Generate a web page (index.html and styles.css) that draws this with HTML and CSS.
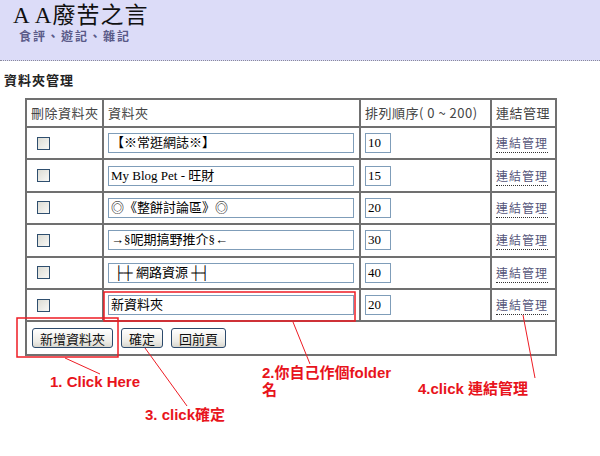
FILE: index.html
```html
<!DOCTYPE html>
<html lang="zh-Hant">
<head>
<meta charset="utf-8">
<title>資料夾管理</title>
<link rel="stylesheet" href="styles.css">
</head>
<body>
<div class="page">
  <header class="banner">
    <h1 class="title">A A廢苦之言</h1>
    <div class="subtitle">食評、遊記、雜記</div>
  </header>

  <h2 class="section">資料夾管理</h2>

  <table class="grid">
    <colgroup>
      <col class="c1"><col class="c2"><col class="c3"><col class="c4">
    </colgroup>
    <thead>
      <tr class="head">
        <th>刪除資料夾</th>
        <th>資料夾</th>
        <th>排列順序( 0 ~ 200)</th>
        <th>連結管理</th>
      </tr>
    </thead>
    <tbody>
      <tr>
        <td><span class="chk"></span></td>
        <td><span class="field name">【※常逛網誌※】</span></td>
        <td><span class="field order">10</span></td>
        <td><a class="link">連結管理</a></td>
      </tr>
      <tr>
        <td><span class="chk"></span></td>
        <td><span class="field name">My Blog Pet - 旺財</span></td>
        <td><span class="field order">15</span></td>
        <td><a class="link">連結管理</a></td>
      </tr>
      <tr>
        <td><span class="chk"></span></td>
        <td><span class="field name">◎《整餅討論區》◎</span></td>
        <td><span class="field order">20</span></td>
        <td><a class="link">連結管理</a></td>
      </tr>
      <tr>
        <td><span class="chk"></span></td>
        <td><span class="field name">→§呢期搞野推介§←</span></td>
        <td><span class="field order">30</span></td>
        <td><a class="link">連結管理</a></td>
      </tr>
      <tr>
        <td><span class="chk"></span></td>
        <td><span class="field name">&nbsp;├┼ 網路資源 ┼┤</span></td>
        <td><span class="field order">40</span></td>
        <td><a class="link">連結管理</a></td>
      </tr>
      <tr>
        <td><span class="chk"></span></td>
        <td><span class="field name">新資料夾</span></td>
        <td><span class="field order">20</span></td>
        <td><a class="link">連結管理</a></td>
      </tr>
      <tr class="foot">
        <td colspan="4">
          <div class="buttons">
            <button class="btn">新增資料夾</button>
            <button class="btn">確定</button>
            <button class="btn">回前頁</button>
          </div>
        </td>
      </tr>
    </tbody>
  </table>

  <svg class="marks" width="600" height="456" viewBox="0 0 600 456" aria-hidden="true">
    <rect x="17" y="318" width="101" height="39" fill="none" stroke="#ee1c24" stroke-width="1.5"/>
    <rect x="104" y="292" width="251" height="29" fill="none" stroke="#ee1c24" stroke-width="1.5"/>
    <line x1="65" y1="358" x2="100" y2="374" stroke="#ee1c24" stroke-width="1"/>
    <line x1="145" y1="348" x2="187" y2="406" stroke="#ee1c24" stroke-width="1"/>
    <line x1="293" y1="322" x2="310" y2="364" stroke="#ee1c24" stroke-width="1"/>
    <line x1="523" y1="315" x2="535" y2="378" stroke="#ee1c24" stroke-width="1"/>
  </svg>

  <div class="note n1">1. Click Here</div>
  <div class="note n2">2.你自己作個folder<br>名</div>
  <div class="note n3">3. click確定</div>
  <div class="note n4">4.click 連結管理</div>
</div>
</body>
</html>
```

FILE: styles.css
```css
html, body {
  margin: 0;
  padding: 0;
  background: #ffffff;
}

.page {
  position: relative;
  width: 600px;
  height: 456px;
  overflow: hidden;
  font-family: "Noto Sans CJK TC", "Liberation Sans", sans-serif;
  color: #222;
}

.banner {
  height: 61px;
  background: #dcdcf8;
  border-bottom: 1px dotted #8a8a9a;
  padding: 4px 0 0 13px;
  box-sizing: border-box;
}

.title {
  margin: 0;
  font-family: "Liberation Serif", "Noto Sans CJK TC", serif;
  font-size: 23px;
  font-weight: normal;
  line-height: 24px;
  letter-spacing: 1px;
  color: #111;
}

.subtitle {
  margin: 1px 0 0 6px;
  font-size: 12px;
  font-weight: bold;
  line-height: 14px;
  letter-spacing: 2px;
  color: #5a5a88;
}

.section {
  margin: 11px 0 0 4px;
  font-size: 13px;
  font-weight: bold;
  line-height: 16px;
  letter-spacing: 1px;
  color: #222;
}

.grid {
  margin: 10px 0 0 25px;
  width: 530px;
  table-layout: fixed;
  border-collapse: collapse;
  border: 2px solid #5c5c5c;
}

.c1 { width: 77px; }
.c2 { width: 257px; }
.c3 { width: 131px; }
.c4 { width: 65px; }

.grid th,
.grid td {
  border: 2px solid #707070;
  padding: 0 4px;
  text-align: left;
  vertical-align: middle;
  font-size: 13px;
  line-height: 16px;
}

.grid th {
  height: 26px;
  font-weight: normal;
  color: #444;
  letter-spacing: 0.5px;
  white-space: nowrap;
}

.grid tbody td {
  height: 30.4px;
}

.chk {
  display: block;
  width: 11px;
  height: 11px;
  margin-left: 6px;
  border: 1px solid #2f4f6f;
  background: linear-gradient(135deg, #dcdcd4, #f8f8f6);
}

.field {
  display: block;
  box-sizing: border-box;
  height: 20px;
  border: 1px solid #7f9db9;
  background: #fff;
  font-family: "Liberation Serif", "Noto Sans CJK TC", serif;
  font-size: 13px;
  line-height: 18px;
  padding: 0 2px;
  color: #000;
  white-space: nowrap;
  overflow: hidden;
}

.name { width: 246px; }
.order { width: 26px; }

.link {
  font-size: 12px;
  letter-spacing: 1px;
  color: #55557a;
  text-decoration: none;
  border-bottom: 1px dotted #333;
  padding-bottom: 1px;
}

.grid tr.foot td {
  height: 32px;
  padding: 0 0 0 5px;
}

.buttons {
  display: flex;
  gap: 8px;
  align-items: center;
}

.btn {
  height: 20px;
  padding: 0 7px;
  border: 1px solid #2c4a6c;
  border-radius: 3px;
  background: linear-gradient(#ffffff, #ecebe6 70%, #d8d6ce);
  font-family: "Noto Sans CJK TC", "Liberation Sans", sans-serif;
  font-size: 13px;
  line-height: 17px;
  color: #111;
}

.marks {
  position: absolute;
  left: 0;
  top: 0;
  pointer-events: none;
}

.note {
  position: absolute;
  font-family: "Liberation Sans", "Noto Sans CJK TC", sans-serif;
  font-size: 15px;
  font-weight: bold;
  line-height: 17px;
  color: #e8141c;
  white-space: nowrap;
}

.n1 { left: 50px; top: 373px; }
.n2 { left: 262px; top: 364px; }
.n3 { left: 145px; top: 406px; }
.n4 { left: 418px; top: 380px; }
```
